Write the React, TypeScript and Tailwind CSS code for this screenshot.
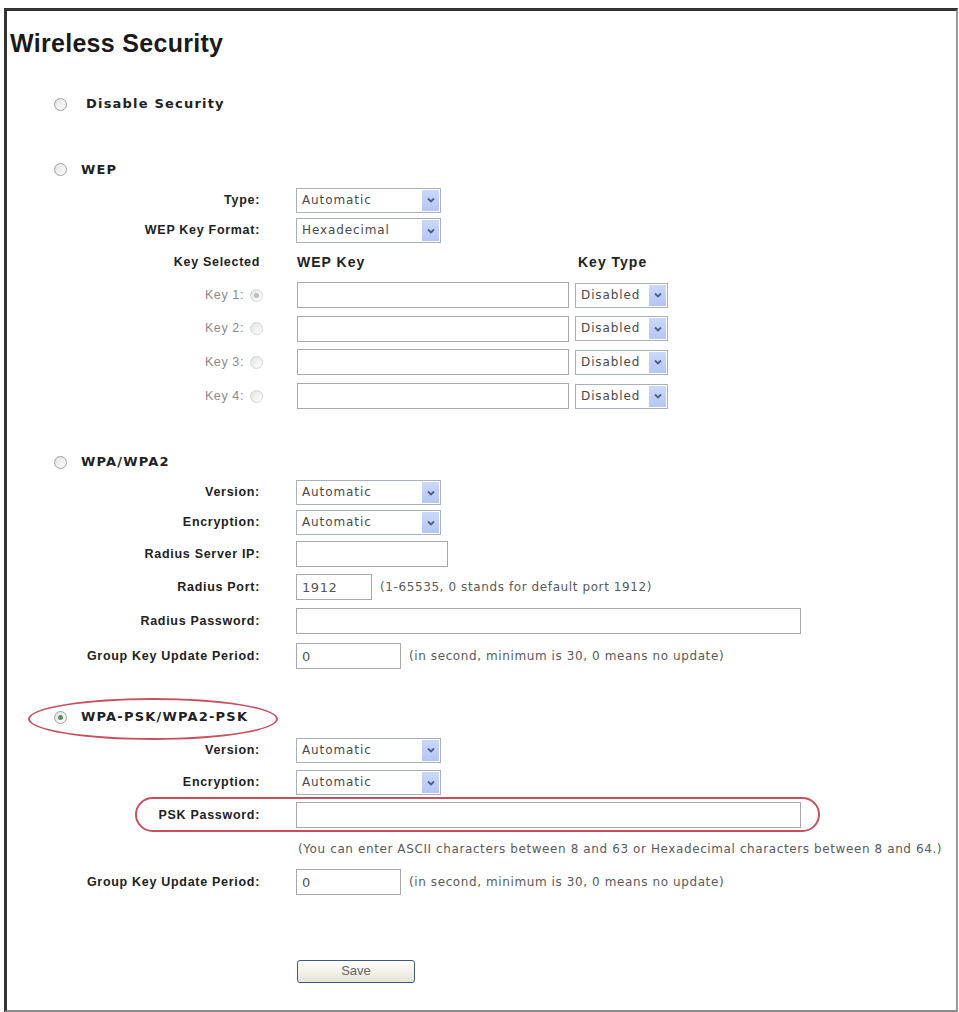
import React from "react";

const sans = "font-['Liberation_Sans',Arial,sans-serif]";
const wide = "font-['DejaVu_Sans',Verdana,sans-serif]";

function Radio({ checked = false, faint = false }: { checked?: boolean; faint?: boolean }) {
  return (
    <span
      className={`flex h-[13px] w-[13px] shrink-0 items-center justify-center rounded-full border bg-gradient-to-br from-[#e2e2dc] to-white ${
        faint ? "border-[#d0d4d8]" : "border-[#98a0a8]"
      }`}
    >
      {checked && <span className={`h-[5px] w-[5px] rounded-full ${faint ? "bg-[#b8c0b8]" : "bg-[#5f8f66]"}`} />}
    </span>
  );
}

function Select({ value, w }: { value: string; w: string }) {
  return (
    <div className={`flex h-[25px] items-stretch border border-[#a9b0b8] bg-white ${w}`}>
      <span className={`flex-1 truncate pl-[5px] text-[12px] leading-[23px] tracking-[0.9px] text-[#4a4a4a] ${wide}`}>
        {value}
      </span>
      <span className="m-[1px] flex w-[17px] items-center justify-center bg-gradient-to-b from-[#cbd8fb] to-[#b4c6f3]">
        <svg width="8" height="6" viewBox="0 0 8 6">
          <path d="M1 1.5 L4 4.5 L7 1.5" fill="none" stroke="#4b5f8d" strokeWidth="1.8" />
        </svg>
      </span>
    </div>
  );
}

function TextBox({ w, value = "" }: { w: string; value?: string }) {
  return (
    <input
      readOnly
      value={value}
      className={`h-[26px] border border-[#a8a8a8] bg-white pl-[5px] text-[13px] tracking-[0.6px] text-[#555] outline-none ${wide} ${w}`}
    />
  );
}

function Field({ h, label, children }: { h: string; label: React.ReactNode; children?: React.ReactNode }) {
  return (
    <div className={`flex items-center ${h}`}>
      <div className={`w-[253px] shrink-0 text-right text-[12.5px] font-bold tracking-[0.7px] text-[#222] ${sans}`}>
        {label}
      </div>
      <div className="ml-[36px] flex items-center">{children}</div>
    </div>
  );
}

function Heading({ h, mt, text, gap, checked }: { h: string; mt: string; text: string; gap: string; checked?: boolean }) {
  return (
    <div className={`flex items-center pl-[47px] ${h} ${mt}`}>
      <Radio checked={checked} />
      <span className={`text-[13px] font-bold tracking-[1.2px] text-[#222] ${wide} ${gap}`}>{text}</span>
    </div>
  );
}

function Note({ children, ml }: { children: React.ReactNode; ml: string }) {
  return <span className={`text-[12px] tracking-[0.6px] text-[#5a5a5a] ${wide} ${ml}`}>{children}</span>;
}

function KeyRow({ n, h, checked }: { n: number; h: string; checked?: boolean }) {
  return (
    <div className={`flex items-center ${h}`}>
      <div className={`flex w-[256px] shrink-0 items-center justify-end gap-[6px] text-[12.5px] tracking-[0.6px] text-[#8a8a8a] ${sans}`}>
        <span>Key {n}:</span>
        <Radio checked={checked} faint />
      </div>
      <div className="ml-[34px] flex items-center gap-[6px]">
        <TextBox w="w-[272px]" />
        <Select value="Disabled" w="w-[93px]" />
      </div>
    </div>
  );
}

export default function App() {
  return (
    <div className="h-[1012px] w-[959px] bg-white pl-[4px] pt-[8px]">
      <div className="h-[1004px] w-[954px] border-t-[3px] border-l-[3px] border-r-2 border-b-2 border-t-[#333] border-l-[#333] border-r-[#9a9a9a] border-b-[#8a8a8a]">
        <div className="mt-[9px] flex h-[48px] items-center pl-[3px]">
          <h1 className={`text-[25px] font-bold tracking-[0.3px] text-[#1a1a1a] ${sans}`}>Wireless Security</h1>
        </div>

        <Heading h="h-[32px]" mt="mt-[20px]" text="Disable Security" gap="ml-[19px]" />

        <Heading h="h-[31px]" mt="mt-[34px]" text="WEP" gap="ml-[14px]" />
        <Field h="h-[30px]" label="Type:">
          <Select value="Automatic" w="w-[145px]" />
        </Field>
        <Field h="h-[31px]" label="WEP Key Format:">
          <Select value="Hexadecimal" w="w-[145px]" />
        </Field>
        <div className={`flex h-[32px] items-center font-bold text-[#222] ${sans}`}>
          <div className="w-[253px] shrink-0 text-right text-[12.5px] tracking-[0.7px]">Key Selected</div>
          <div className="ml-[37px] w-[281px] text-[14px] tracking-[1px]">WEP Key</div>
          <div className="text-[14px] tracking-[1px]">Key Type</div>
        </div>
        <KeyRow n={1} h="h-[34px]" checked />
        <KeyRow n={2} h="h-[33px]" />
        <KeyRow n={3} h="h-[34px]" />
        <KeyRow n={4} h="h-[34px]" />

        <Heading h="h-[32px]" mt="mt-[33px]" text="WPA/WPA2" gap="ml-[14px]" />
        <Field h="h-[29px]" label="Version:">
          <Select value="Automatic" w="w-[145px]" />
        </Field>
        <Field h="h-[31px]" label="Encryption:">
          <Select value="Automatic" w="w-[145px]" />
        </Field>
        <Field h="h-[32px]" label="Radius Server IP:">
          <TextBox w="w-[152px]" />
        </Field>
        <Field h="h-[34px]" label="Radius Port:">
          <TextBox w="w-[76px]" value="1912" />
          <Note ml="ml-[8px]">(1-65535, 0 stands for default port 1912)</Note>
        </Field>
        <Field h="h-[34px]" label="Radius Password:">
          <TextBox w="w-[505px]" />
        </Field>
        <Field h="h-[36px]" label="Group Key Update Period:">
          <TextBox w="w-[105px]" value="0" />
          <Note ml="ml-[8px]">(in second, minimum is 30, 0 means no update)</Note>
        </Field>

        <div className="relative mt-[27px]">
          <Heading h="h-[32px]" mt="mt-0" text="WPA-PSK/WPA2-PSK" gap="ml-[14px]" checked />
          <div className="absolute left-[21px] top-[-3px] h-[42px] w-[250px] rounded-[50%] border-2 border-[#c8505e]" />
        </div>
        <Field h="h-[34px]" label="Version:">
          <Select value="Automatic" w="w-[145px]" />
        </Field>
        <Field h="h-[31px]" label="Encryption:">
          <Select value="Automatic" w="w-[145px]" />
        </Field>
        <div className="relative">
          <Field h="h-[34px]" label="PSK Password:">
            <TextBox w="w-[505px]" />
          </Field>
          <div className="absolute left-[128px] top-[-1px] h-[35px] w-[685px] rounded-full border-2 border-[#c8505e]" />
        </div>
        <div className="flex h-[33px] items-center pl-[291px]">
          <Note ml="ml-0">
            (You can enter ASCII characters between 8 and 63 or Hexadecimal characters between 8 and 64.)
          </Note>
        </div>
        <Field h="h-[34px]" label="Group Key Update Period:">
          <TextBox w="w-[105px]" value="0" />
          <Note ml="ml-[8px]">(in second, minimum is 30, 0 means no update)</Note>
        </Field>

        <div className="mt-[56px] flex h-[32px] items-center pl-[290px]">
          <button
            className={`h-[23px] w-[118px] rounded-[3px] border border-[#3d5a86] bg-gradient-to-b from-white to-[#e6e3d6] text-[13px] text-[#666] ${sans}`}
          >
            Save
          </button>
        </div>
      </div>
    </div>
  );
}
